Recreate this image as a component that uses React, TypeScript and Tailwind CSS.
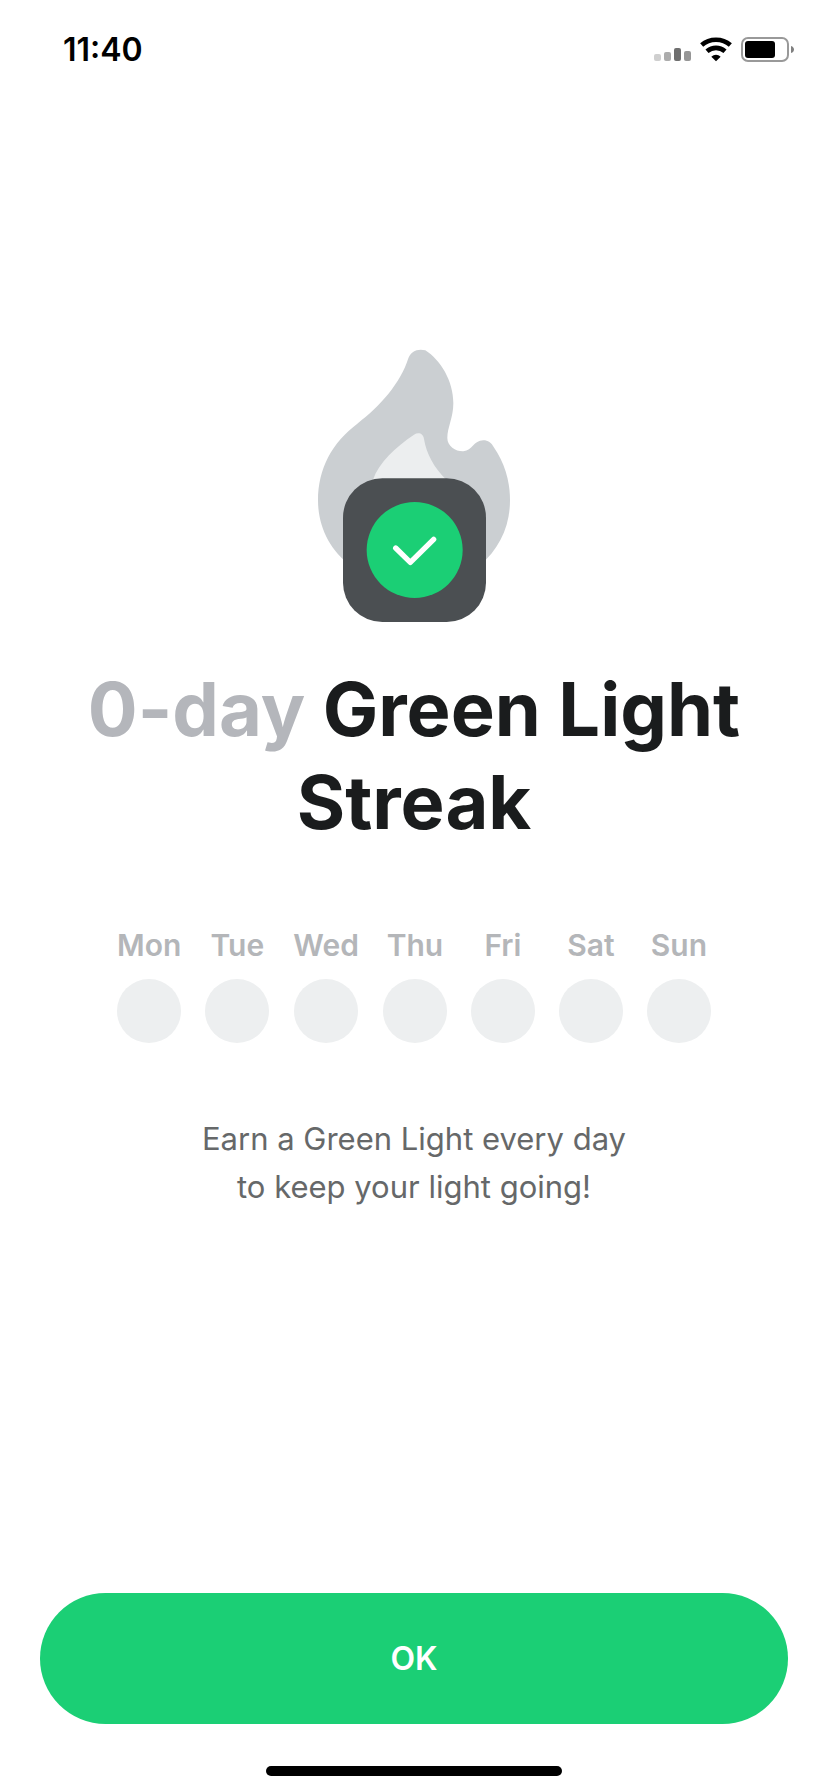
import React from 'react';

const DAYS = ['Mon', 'Tue', 'Wed', 'Thu', 'Fri', 'Sat', 'Sun'];

const StatusBar: React.FC = () => (
  <header className="flex h-[99px] items-center justify-between pr-[34px] pl-[63px] text-black">
    <span className="text-[32px] leading-10 font-semibold">11:40</span>
    <div className="flex items-center gap-[9px]">
      <svg className="h-[25px] w-[37px]" viewBox="0 0 37 25" aria-label="Signal">
        <rect x="0" y="17" width="7" height="7" rx="2" fill="#cfcfcf" />
        <rect x="10" y="15" width="7" height="9" rx="2" fill="#acacac" />
        <rect x="20" y="11" width="7" height="13" rx="2" fill="#6f6f6f" />
        <rect x="30" y="14" width="7" height="10" rx="2" fill="#969696" />
      </svg>
      <svg className="h-[25px] w-8" viewBox="0 0 96 75" fill="none" aria-label="Wi-Fi">
        <path d="M5 24C29 3 67 3 91 24" stroke="#000" strokeWidth="14" />
        <path d="M21 43C37 29 59 29 75 43" stroke="#000" strokeWidth="14" />
        <path d="M34 59C42 51 54 51 62 59L48 73Z" fill="#000" />
      </svg>
      <svg className="h-[25px] w-[53px]" viewBox="0 0 53 25" aria-label="Battery">
        <rect x="1" y="1" width="46" height="23" rx="6" fill="none" stroke="#999" strokeWidth="2" />
        <rect x="4" y="4" width="30" height="17" rx="3" fill="#000" />
        <path d="M50 9C54 10 54 15 50 16Z" fill="#808080" />
      </svg>
    </div>
  </header>
);

const StreakIcon: React.FC = () => (
  <svg className="h-[273px] w-48" viewBox="54 58 576 819" fill="none" aria-hidden="true">
    <path
      d="M325 86C332 66 353 55 376 62C421 91 460 153 460 221C460 265 442 293 442 325C442 350 468 366 490 365C518 362 520 333 550 332C564 332 574 339 581 352C612 398 630 449 630 512C630 591 597 659 540 706H150C90 662 54 591 54 512C54 417 96 339 172 282C239 232 302 160 325 86Z"
      fill="#cbcfd2"
    />
    <path d="M219 450C237 398 286 353 342 315C355 307 370 311 372 328C379 372 403 416 439 450Z" fill="#eceeef" />
    <rect x="129" y="446" width="429" height="431" rx="118" fill="#4b4f52" />
    <circle cx="344" cy="661" r="144" fill="#1bcf75" />
    <path d="M287 655L331 698L401 629" stroke="#fff" strokeWidth="16" strokeLinecap="round" strokeLinejoin="round" />
  </svg>
);

const App: React.FC = () => {
  return (
    <div className="flex min-h-screen flex-col bg-white font-['Inter',sans-serif]">
      <StatusBar />

      <main className="flex flex-1 flex-col items-center px-10 pt-[250px] text-center">
        <StreakIcon />

        <h1 className="mt-[41px] max-w-[700px] text-[74px] leading-[93px] font-bold text-[#1a1c1d]">
          <span className="text-[#b4b6bb]">0-day</span> Green Light Streak
        </h1>

        {/* Week progress */}
        <ul className="mt-[76px] flex gap-6">
          {DAYS.map(day => (
            <li key={day} className="flex min-w-16 flex-col items-center gap-[14px]">
              <span className="text-[30px] leading-10 font-semibold text-[#b4b6b9]">{day}</span>
              <span className="size-16 rounded-full bg-[#edeff0]"></span>
            </li>
          ))}
        </ul>

        <p className="mt-[72px] max-w-[480px] text-[31px] leading-12 text-[#666869]">
          Earn a Green Light every day
          <br />
          to keep your light going!
        </p>
      </main>

      <footer className="flex flex-col items-center px-10 pb-4">
        <button type="button" className="h-[131px] w-full rounded-full bg-[#1bcf75] text-[32px] font-semibold text-white">
          OK
        </button>
        <div className="mt-[42px] h-[10px] w-[296px] rounded-full bg-black"></div>
      </footer>
    </div>
  );
};

export default App;
